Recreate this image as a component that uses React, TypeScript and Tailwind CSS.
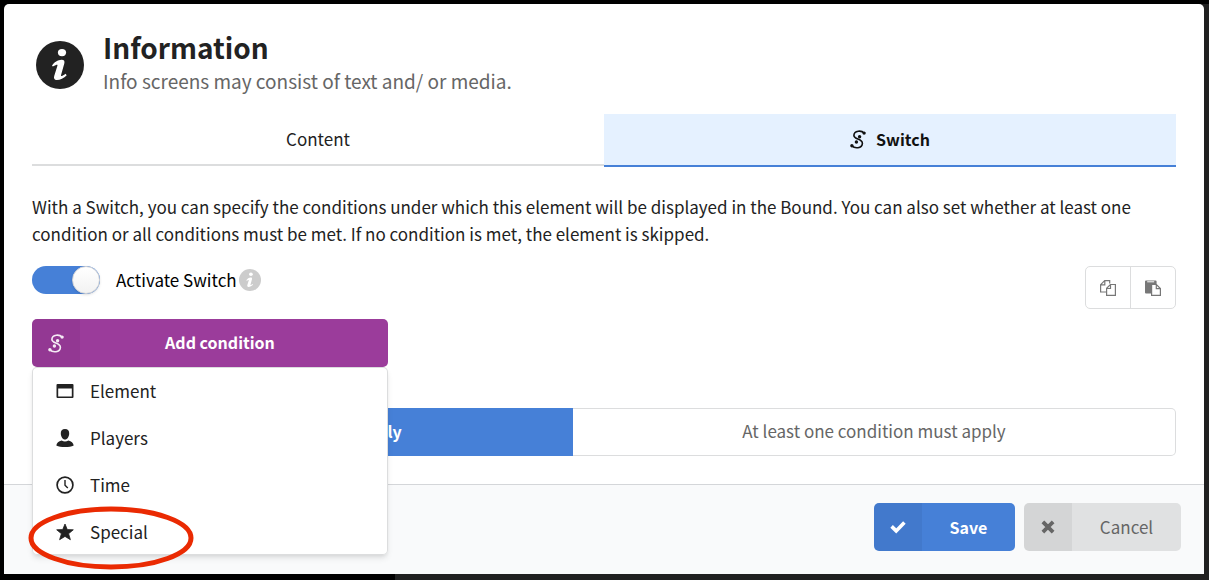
import React, { useState } from "react";

const SwitchIcon = ({ className = "" }) => (
  <svg viewBox="0 0 16 19" className={className} fill="none" stroke="currentColor" aria-hidden="true">
    <path
      d="M14 3C11.6.3 4.2.2 3.9 5.4C3.8 9.6 12.6 8.6 12.4 13.5C12 18.7 4.6 18.7 2 15.9"
      strokeWidth="1.6"
      strokeLinecap="round"
    />
    <g fill="currentColor" stroke="none">
      <circle cx="14.1" cy="3.1" r="1.7" />
      <circle cx="1.9" cy="15.8" r="1.7" />
      <circle cx="9.6" cy="6.7" r="1.7" />
      <circle cx="6.4" cy="12" r="1.7" />
    </g>
  </svg>
);

const InfoIcon = ({ className = "" }) => (
  <svg viewBox="0 0 48 48" className={className} aria-hidden="true">
    <circle cx="24" cy="24" r="24" fill="currentColor" />
    <ellipse cx="26" cy="11.6" rx="4.1" ry="3.7" fill="#fff" />
    <path
      d="M16 24.6C18 21.4 22 19 25.4 18.8C28.2 18.7 28.9 20 28.3 22.6L25 34.3C24.8 35.5 25.6 35.5 29.8 32.8L30.6 34.4C28 37 23.6 39.2 20.6 39C18.2 38.9 17.6 37.4 18.2 35L21.4 24.8C21.8 23.3 21 23.3 16.8 25.6Z"
      fill="#fff"
    />
  </svg>
);

const ElementIcon = () => (
  <svg viewBox="0 0 18 18" className="size-[18px]" aria-hidden="true">
    <path
      d="M1.5 2h15a1 1 0 0 1 1 1v12a1 1 0 0 1-1 1h-15a1 1 0 0 1-1-1V3a1 1 0 0 1 1-1zM2.2 6.4v8h13.6v-8z"
      fill="currentColor"
      fillRule="evenodd"
    />
  </svg>
);

const PlayersIcon = () => (
  <svg viewBox="0 0 18 18" className="size-[18px]" fill="currentColor" aria-hidden="true">
    <path d="M9 0C11.9 0 13.4 2 13.2 4.8C13.1 7.6 11.4 10.6 9 10.6S4.9 7.6 4.8 4.8C4.6 2 6.1 0 9 0Z" />
    <path d="M5.6 11.4Q9 13.6 12.4 11.4C15.4 12.2 17.3 13.8 17.7 16.4C15.5 17.7 12.5 18 9 18S2.5 17.7.3 16.4C.7 13.8 2.6 12.2 5.6 11.4Z" />
  </svg>
);

const TimeIcon = () => (
  <svg viewBox="0 0 18 18" className="size-[18px]" fill="none" stroke="currentColor" aria-hidden="true">
    <circle cx="9" cy="9" r="7.9" strokeWidth="1.7" />
    <path d="M9 4v5.2l2.8 2.8" strokeWidth="1.4" />
  </svg>
);

const StarIcon = () => (
  <svg viewBox="0 0 18 18" className="size-[18px]" fill="currentColor" aria-hidden="true">
    <path
      d="M9 1l2.3 5.6 6 .2-4.7 3.9 1.8 6L9 13.4l-5.4 3.3 1.8-6L.7 6.8l6-.2z"
      stroke="currentColor"
      strokeWidth=".8"
      strokeLinejoin="round"
    />
  </svg>
);

const CopyIcon = () => (
  <svg viewBox="0 0 16 16" className="size-4" fill="none" stroke="currentColor" aria-hidden="true">
    <path d="M6.5 12H.6V4.7L4.7.6h5v3M4.8.8v4H.8" strokeWidth="1.2" />
    <path d="M10.4 4.5h5v10.9H6.6V8.3zM10.5 4.6v3.9h-3.8" strokeWidth="1.2" />
  </svg>
);

const PasteIcon = () => (
  <svg viewBox="0 0 16 16" className="size-4" aria-hidden="true">
    <path d="M0 1.4Q0 .4 1 .4h9.6q1 0 1 1v3H6.4v9.2H1q-1 0-1-1z" fill="currentColor" />
    <path d="M2.2 1.8h7" stroke="#fff" strokeWidth="1" />
    <path d="M6.6 4.5h4.8l4 4v6.9H6.6zM11.3 4.6v4h4" fill="#fff" stroke="currentColor" strokeWidth="1.2" />
  </svg>
);

const CheckIcon = () => (
  <svg viewBox="0 0 16 14" className="h-[14px] w-4" fill="none" stroke="currentColor" aria-hidden="true">
    <path d="M1.6 6.4l4.6 4.5L14.4 2.6" strokeWidth="3.6" />
  </svg>
);

const CloseIcon = () => (
  <svg viewBox="0 0 14 14" className="size-[14px]" fill="none" stroke="currentColor" aria-hidden="true">
    <path d="M3.2 3.2l7.6 7.6M10.8 3.2l-7.6 7.6" strokeWidth="3.8" strokeLinecap="square" />
  </svg>
);

const conditions = [
  { label: "Element", icon: <ElementIcon /> },
  { label: "Players", icon: <PlayersIcon /> },
  { label: "Time", icon: <TimeIcon /> },
  { label: "Special", icon: <StarIcon />, marked: true },
];

const App = () => {
  const [active, setActive] = useState(true);

  return (
    <div className="min-h-screen border-t-4 border-black bg-[#202020] bg-[linear-gradient(90deg,#000_395px,transparent_395px)] pr-[5px] pb-[6px] pl-1 font-['Noto_Sans_CJK_SC',sans-serif] text-[17px] text-[#222]">
      <main className="overflow-hidden rounded-t-[5px] bg-white">
        <div className="px-7 pt-[27px] pb-7">
          <header className="flex items-center gap-[19px] pl-1">
            <InfoIcon className="size-12" />
            <div>
              <h1 className="text-[28px] leading-8 font-bold">Information</h1>
              <p className="text-[19px] leading-9 text-[#666]">
                Info screens may consist of text and/ or media.
              </p>
            </div>
          </header>

          <nav className="mt-[15px] grid grid-cols-2" role="tablist">
            <button role="tab" aria-selected="false" className="h-[52px] border-b-2 border-[#dcddde]">
              Content
            </button>
            <button
              role="tab"
              aria-selected="true"
              className="flex h-[53px] items-center justify-center gap-[10px] border-b-2 border-[#4680d7] bg-[#e5f1ff] text-[16px] font-bold text-[#111]"
            >
              <SwitchIcon className="h-[19px] w-4" />
              <span className="pb-0.5">Switch</span>
            </button>
          </nav>

          <p className="mt-[26px] leading-[27px]">
            With a Switch, you can specify the conditions under which this element will be displayed in the Bound. You
            can also set whether at least one condition or all conditions must be met. If no condition is met, the
            element is skipped.
          </p>

          <div className="mt-[19px] flex items-start justify-between">
            <label className="flex h-7 items-center text-black">
              <input
                type="checkbox"
                checked={active}
                onChange={() => setActive(!active)}
                className="peer sr-only"
              />
              <span className="mr-4 flex h-7 w-[68px] justify-start rounded-full bg-gray-300 peer-checked:justify-end peer-checked:bg-[#4680d7]">
                <span className="size-7 rounded-full border border-[#d4d4d5] bg-linear-to-b from-white to-[#f2f2f2] shadow" />
              </span>
              Activate Switch
              <InfoIcon className="ml-0.5 size-[22px] text-[#ccc]" />
            </label>
            <div className="flex h-[43px] divide-x divide-[#dcddde] rounded-[5px] border border-[#dcddde] text-[#777]">
              <button aria-label="Copy" className="flex w-[45px] items-center justify-center">
                <CopyIcon />
              </button>
              <button aria-label="Paste" className="flex w-11 items-center justify-center">
                <PasteIcon />
              </button>
            </div>
          </div>

          <div className="relative mt-[10px] w-[356px]">
            <button className="flex h-12 w-full items-center overflow-hidden rounded-[5px] bg-[#9b3c9b] text-[16px] font-bold text-white">
              <span className="flex h-full w-12 items-center justify-center bg-black/5">
                <SwitchIcon className="h-[19px] w-4 opacity-90" />
              </span>
              <span className="flex-1 pr-7 pb-0.5">Add condition</span>
            </button>
            <ul className="absolute top-full z-10 w-full rounded-[5px] bg-white shadow-md ring-1 ring-[#dcddde] ring-inset">
              {conditions.map(({ label, icon, marked }) => (
                <li key={label} className="relative">
                  <button className="flex h-[47px] w-full items-center gap-4 pl-6 text-left">
                    {icon}
                    <span className="pt-px">{label}</span>
                  </button>
                  {marked && (
                    <svg
                      viewBox="0 0 166 64"
                      className="pointer-events-none absolute -top-[2px] -left-1 h-16 w-[166px]"
                      aria-hidden="true"
                    >
                      <ellipse cx="83" cy="32" rx="80" ry="29" fill="none" stroke="#ea2a02" strokeWidth="5" />
                    </svg>
                  )}
                </li>
              ))}
            </ul>
          </div>

          <div className="mt-[41px] grid h-12 grid-cols-[541px_1fr]">
            <button className="rounded-l-[5px] bg-[#4680d7] pb-0.5 text-[16px] font-bold text-white">
              All conditions must apply
            </button>
            <button className="rounded-r-[5px] border border-l-0 border-[#dcddde] pb-0.5 text-[#666]">
              At least one condition must apply
            </button>
          </div>
        </div>

        <footer className="flex justify-end gap-[9px] border-t border-[#d4d6d9] bg-[#f9fafb] px-[23px] pt-[18px] pb-[23px]">
          <button className="flex h-12 w-[141px] items-center overflow-hidden rounded-[5px] bg-[#4680d7] text-[16px] font-bold text-white">
            <span className="flex h-full w-12 items-center justify-center bg-black/5">
              <CheckIcon />
            </span>
            <span className="flex-1">Save</span>
          </button>
          <button className="flex h-12 w-[157px] items-center overflow-hidden rounded-[5px] bg-[#e0e1e2] text-[#666]">
            <span className="flex h-full w-12 items-center justify-center bg-black/5">
              <CloseIcon />
            </span>
            <span className="flex-1">Cancel</span>
          </button>
        </footer>
      </main>
    </div>
  );
};

export default App;
